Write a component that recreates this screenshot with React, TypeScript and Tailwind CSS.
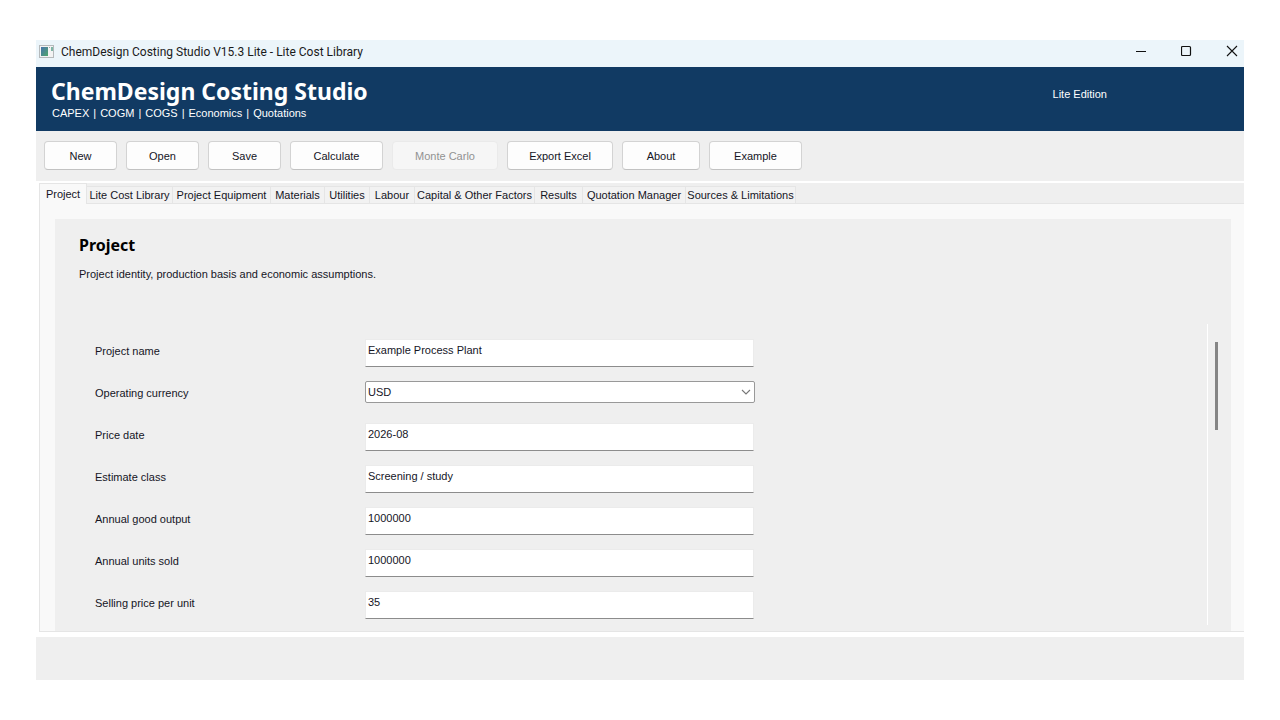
import React, { useState } from 'react';

const actions = [
    { label: 'New', width: 'w-[73px]' },
    { label: 'Open', width: 'w-[73px]' },
    { label: 'Save', width: 'w-[73px]' },
    { label: 'Calculate', width: 'w-[93px]' },
    { label: 'Monte Carlo', width: 'w-[106px]', disabled: true },
    { label: 'Export Excel', width: 'w-[106px]' },
    { label: 'About', width: 'w-[78px]' },
    { label: 'Example', width: 'w-[93px]' },
];

const tabs = [
    { label: 'Project', width: 'w-12' },
    { label: 'Lite Cost Library', width: 'w-[86px]' },
    { label: 'Project Equipment', width: 'w-[98px]' },
    { label: 'Materials', width: 'w-[54px]' },
    { label: 'Utilities', width: 'w-[45px]' },
    { label: 'Labour', width: 'w-[45px]' },
    { label: 'Capital & Other Factors', width: 'w-[120px]' },
    { label: 'Results', width: 'w-12' },
    { label: 'Quotation Manager', width: 'w-[103px]' },
    { label: 'Sources & Limitations', width: 'w-[110px]' },
];

const fields = [
    { id: 'name', label: 'Project name', value: 'Example Process Plant' },
    { id: 'currency', label: 'Operating currency', value: 'USD', options: ['USD', 'EUR', 'GBP'] },
    { id: 'priceDate', label: 'Price date', value: '2026-08' },
    { id: 'estimateClass', label: 'Estimate class', value: 'Screening / study' },
    { id: 'output', label: 'Annual good output', value: '1000000' },
    { id: 'sold', label: 'Annual units sold', value: '1000000' },
    { id: 'price', label: 'Selling price per unit', value: '35' },
];

function TitleBar() {
    return (
        <div className="flex h-[27px] shrink-0 items-center bg-[#ecf5fa] pl-[3px] pr-[6px]">
            <svg width="16" height="18" viewBox="0 0 16 18" aria-hidden="true">
                <defs>
                    <linearGradient id="appIcon" x1="0" y1="0" x2="1" y2="1">
                        <stop offset="0" stopColor="#4673ad" />
                        <stop offset="1" stopColor="#4fa66c" />
                    </linearGradient>
                </defs>
                <rect x="0.5" y="0.5" width="14" height="12" fill="#f3f3f3" stroke="#b5b9bb" />
                <rect x="2" y="2" width="7" height="9" fill="url(#appIcon)" />
                <rect x="10" y="2" width="1" height="1" fill="#9aa6ad" />
                <rect x="12" y="2" width="2" height="4" fill="#7eb5a5" />
            </svg>
            <span className="ml-[6px] pb-[3px] font-[Roboto,sans-serif] text-[12px] leading-4 text-[#1a1a1a]">
                ChemDesign Costing Studio V15.3 Lite - Lite Cost Library
            </span>
            <div className="ml-auto flex gap-[33px] pb-[5px]">
                <button type="button" aria-label="Minimize">
                    <svg width="12" height="12" viewBox="0 0 12 12">
                        <path d="M0 6.5h10" stroke="#111" fill="none" />
                    </svg>
                </button>
                <button type="button" aria-label="Maximize">
                    <svg width="12" height="12" viewBox="0 0 12 12">
                        <rect x="0.5" y="1.5" width="9" height="9" rx="1" stroke="#111" strokeWidth="1.2" fill="none" />
                    </svg>
                </button>
                <button type="button" aria-label="Close">
                    <svg width="12" height="12" viewBox="0 0 12 12">
                        <path d="M1 1l10 10M11 1L1 11" stroke="#111" strokeWidth="1.1" fill="none" />
                    </svg>
                </button>
            </div>
        </div>
    );
}

function App() {
    const [active, setActive] = useState('Project');
    const [values, setValues] = useState<Record<string, string>>(
        Object.fromEntries(fields.map((f) => [f.id, f.value]))
    );

    const update = (id: string, value: string) => setValues({ ...values, [id]: value });

    return (
        <div className="flex min-h-screen flex-col bg-white px-9 py-10 font-['Liberation_Sans',sans-serif] text-[11px] leading-4 text-[#15151f]">
            <TitleBar />

            <header className="flex h-16 shrink-0 items-start justify-between bg-[#113a63] text-white">
                <div className="pl-[15px] pt-2">
                    <h1 className="font-['Noto_Sans',sans-serif] text-[23px] font-bold leading-8">ChemDesign Costing Studio</h1>
                    <p className="flex gap-1 pl-px leading-3">
                        <span>CAPEX</span>
                        <span>|</span>
                        <span>COGM</span>
                        <span>|</span>
                        <span>COGS</span>
                        <span>|</span>
                        <span>Economics</span>
                        <span>|</span>
                        <span>Quotations</span>
                    </p>
                </div>
                <span className="mr-[137px] mt-[19px]">Lite Edition</span>
            </header>

            <div className="flex h-[50px] shrink-0 items-start gap-[9px] bg-[#efefef] px-2 pt-[10px]">
                {actions.map((a) => (
                    <button
                        key={a.label}
                        type="button"
                        disabled={a.disabled}
                        className={`${a.width} h-[29px] rounded border border-[#d3d3d3] border-b-[#c2c2c2] bg-[#fdfdfd] disabled:border-[#eaeaea] disabled:bg-[#f6f6f6] disabled:text-[#929292]`}
                    >
                        {a.label}
                    </button>
                ))}
            </div>

            <div role="tablist" className="ml-[3px] mt-[2px] flex h-[21px] shrink-0 items-end bg-[#efefef]">
                {tabs.map((t) => (
                    <button
                        key={t.label}
                        type="button"
                        role="tab"
                        aria-selected={active === t.label}
                        onClick={() => setActive(t.label)}
                        className={`${t.width} shrink-0 whitespace-nowrap border-r border-t border-[#e5e5e5] ${
                            active === t.label ? 'h-[21px] border-l bg-[#f9f9f9]' : 'h-[18px] border-b bg-[#f2f2f2]'
                        }`}
                    >
                        {t.label}
                    </button>
                ))}
                <div className="h-[18px] flex-1 border-b border-[#e5e5e5]" />
            </div>

            <main className="ml-[3px] flex flex-1 flex-col border-b border-l border-[#e5e5e5] bg-[#f9f9f9] pl-[15px] pr-[13px] pt-[15px]">
                <section className="flex flex-1 flex-col bg-[#efefef] pl-6 pr-3 pt-[14px]">
                    <h2 className="font-['Noto_Sans',sans-serif] text-[16px] font-bold leading-6 text-black">Project</h2>
                    <p className="mt-[9px]">Project identity, production basis and economic assumptions.</p>

                    <div className="mt-[42px] flex flex-1 pb-[6px]">
                        <form className="flex-1 border-r border-white pl-4 pt-[15px]">
                            {fields.map((f) => (
                                <div key={f.id} className="flex h-[42px] items-start last:h-[34px]">
                                    <label htmlFor={f.id} className="w-[270px] leading-6">
                                        {f.label}
                                    </label>
                                    {f.options ? (
                                        <div className="relative w-[390px]">
                                            <select
                                                id={f.id}
                                                value={values[f.id]}
                                                onChange={(e) => update(f.id, e.target.value)}
                                                className="block h-[22px] w-full appearance-none rounded-xs border border-[#999] bg-white pb-px pl-[2px] outline-none"
                                            >
                                                {f.options.map((o) => (
                                                    <option key={o}>{o}</option>
                                                ))}
                                            </select>
                                            <svg
                                                className="pointer-events-none absolute right-1 top-[7px]"
                                                width="10"
                                                height="8"
                                                viewBox="0 0 10 8"
                                                aria-hidden="true"
                                            >
                                                <path d="M1 2l4 4 4-4" stroke="#777" strokeWidth="1.1" fill="none" />
                                            </svg>
                                        </div>
                                    ) : (
                                        <input
                                            id={f.id}
                                            type="text"
                                            value={values[f.id]}
                                            onChange={(e) => update(f.id, e.target.value)}
                                            className="h-7 w-[389px] border border-[#ebebeb] border-b-[#8c8c8c] bg-white pb-[7px] pl-[2px] outline-none"
                                        />
                                    )}
                                </div>
                            ))}
                        </form>
                        <div className="flex w-[11px] justify-center pt-[18px]">
                            <div className="ml-[5px] h-[88px] w-[3px] bg-[#858585]" />
                        </div>
                    </div>
                </section>
            </main>

            <footer className="mt-[5px] h-[43px] shrink-0 bg-[#efefef]" />
        </div>
    );
}

export default App;
